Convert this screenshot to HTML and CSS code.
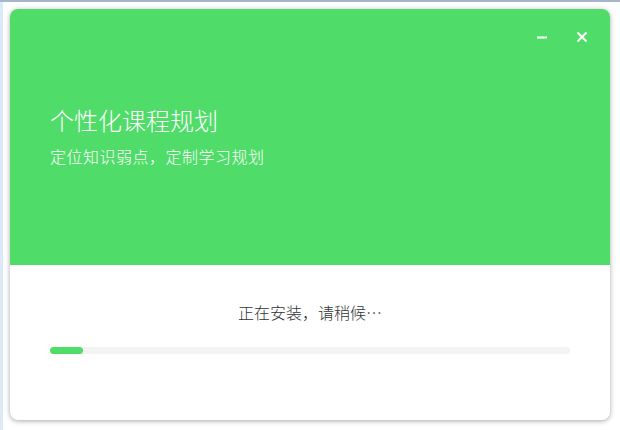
FILE: index.html
```html
<html>
    <head>
        <title>安装</title>
        <meta name="viewport" content="width=device-width, initial-scale=1.0">
        <link rel="stylesheet" href="styles.css">
    </head>
    <body>
        <div class="desk">
            <div class="window">
                <div class="banner">
                    <div class="controls">
                        <span class="ctl">
                            <svg width="12" height="12" viewBox="0 0 12 12"><path d="M1 6.5h10" stroke="#fff" stroke-width="2"/></svg>
                        </span>
                        <span class="ctl">
                            <svg width="12" height="12" viewBox="0 0 12 12"><path d="M1.5 1.5l9 9M10.5 1.5l-9 9" stroke="#fff" stroke-width="2"/></svg>
                        </span>
                    </div>
                    <h1>个性化课程规划</h1>
                    <p>定位知识弱点，定制学习规划</p>
                </div>
                <div class="body">
                    <div class="status">正在安装，请稍候…</div>
                    <div class="track"><div class="fill" style="width: 33px"></div></div>
                </div>
            </div>
        </div>
    </body>
</html>
```

FILE: styles.css
```css
html, body {
    margin: 0;
    height: 100%;
}
body {
    background: #fff;
    border-top: 2px solid #a7b5cb;
    box-sizing: border-box;
    font-family: "Noto Sans CJK SC", "Noto Sans", sans-serif;
}
.desk {
    height: 100%;
    box-sizing: border-box;
    padding: 7px 10px 10px 10px;
    border-left: 3px solid #dce9f7;
    padding-left: 7px;
}
.window {
    width: 600px;
    height: 411px;
    border-radius: 8px;
    overflow: hidden;
    background: #fff;
    box-shadow: 0 1px 5px rgba(0, 0, 0, 0.35);
    display: flex;
    flex-direction: column;
}
.banner {
    height: 256px;
    background: #50dc69;
    color: #fff;
    padding: 0 40px;
    box-sizing: border-box;
}
.controls {
    display: flex;
    justify-content: flex-end;
    gap: 28px;
    padding-top: 22px;
    margin-right: -18px;
    height: 12px;
}
.ctl {
    width: 12px;
    height: 12px;
    display: flex;
}
.banner h1 {
    margin: 61px 0 0 0;
    font-size: 24px;
    font-weight: 300;
    line-height: 32px;
}
.banner p {
    margin: 9px 0 0 0;
    font-size: 16px;
    font-weight: 300;
    letter-spacing: 0.5px;
    line-height: 22px;
}
.body {
    flex: 1;
    padding: 0 40px;
}
.status {
    text-align: center;
    font-size: 16px;
    font-weight: 300;
    color: #333;
    margin-top: 36px;
    line-height: 22px;
}
.track {
    margin-top: 24px;
    height: 7px;
    border-radius: 4px;
    background: #f3f3f3;
}
.fill {
    height: 100%;
    border-radius: 4px;
    background: #50dc69;
}
```
